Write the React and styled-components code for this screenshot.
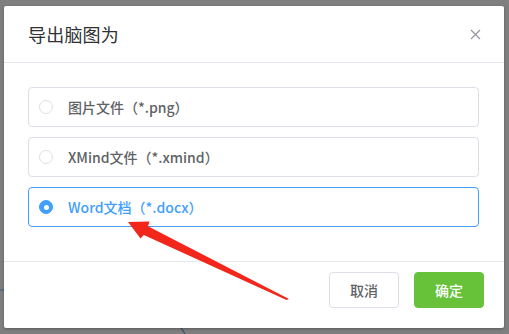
import styled, { createGlobalStyle } from "styled-components";

const GlobalStyle = createGlobalStyle`
  html, body {
    margin: 0;
    padding: 0;
    background: #7f7f7f;
    font-family: "Noto Sans CJK SC", "Noto Sans", sans-serif;
    overflow: hidden;
  }
`;

const options = [
  { label: "图片文件（*.png）" },
  { label: "XMind文件（*.xmind）" },
  { label: "Word文档（*.docx）", checked: true },
];

function App() {
  return (
    <>
      <GlobalStyle />
      <Page>
        <Backdrop viewBox="0 0 509 334" width="509" height="334">
          <line x1="0" y1="290" x2="5" y2="290" stroke="#3d5f80" strokeWidth="1" />
          <line x1="180" y1="326" x2="185" y2="334" stroke="#3d4f5f" strokeWidth="1.2" />
        </Backdrop>
        <Dialog>
          <Header>
            <Title>导出脑图为</Title>
            <Close aria-label="close">
              <svg width="11" height="11" viewBox="0 0 11 11">
                <path d="M1 1L10 10M10 1L1 10" stroke="#909399" strokeWidth="1.1" fill="none" />
              </svg>
            </Close>
          </Header>
          <Body>
            {options.map((o) => (
              <Option key={o.label} $checked={o.checked}>
                <Radio $checked={o.checked} />
                <OptionText $checked={o.checked}>{o.label}</OptionText>
              </Option>
            ))}
          </Body>
          <Footer>
            <Button>取消</Button>
            <Button $primary>确定</Button>
          </Footer>
        </Dialog>
        <Arrow viewBox="0 0 509 334" width="509" height="334">
          <polygon
            points="128,222 149.5,221.6 148,226.3 289,299 286.5,300 143.8,235 140.5,238.5"
            fill="#f3261b"
          />
        </Arrow>
      </Page>
    </>
  );
}

const Page = styled.div`
  position: relative;
  width: 509px;
  height: 334px;
  padding: 6px 5px 6px 4px;
  box-sizing: border-box;
`;

const Backdrop = styled.svg`
  position: absolute;
  left: 0;
  top: 0;
`;

const Arrow = styled.svg`
  position: absolute;
  left: 0;
  top: 0;
  pointer-events: none;
`;

const Dialog = styled.div`
  position: relative;
  width: 500px;
  height: 322px;
  background: #fff;
  border-radius: 2px;
  box-shadow: 0 1px 3px rgba(0, 0, 0, 0.3);
  display: flex;
  flex-direction: column;
  box-sizing: border-box;
`;

const Header = styled.div`
  display: flex;
  align-items: center;
  justify-content: space-between;
  height: 56px;
  padding: 0 23px 0 24px;
  border-bottom: 1px solid #e4e7ed;
`;

const Title = styled.span`
  font-size: 18px;
  color: #303133;
  letter-spacing: 0.2px;
`;

const Close = styled.span`
  display: flex;
  align-items: center;
  justify-content: center;
  width: 11px;
  height: 11px;
`;

const Body = styled.div`
  display: flex;
  flex-direction: column;
  gap: 10px;
  padding: 24px 25px 33px 24px;
`;

const Option = styled.div`
  display: flex;
  align-items: center;
  height: 40px;
  box-sizing: border-box;
  padding-left: 10px;
  border: 1px solid ${({ $checked }) => ($checked ? "#409eff" : "#dcdfe6")};
  border-radius: 4px;
`;

const Radio = styled.span`
  width: 14px;
  height: 14px;
  box-sizing: border-box;
  border-radius: 50%;
  border: 1px solid ${({ $checked }) => ($checked ? "#409eff" : "#dcdfe6")};
  background: ${({ $checked }) => ($checked ? "#409eff" : "#fff")};
  display: flex;
  align-items: center;
  justify-content: center;

  &::after {
    content: "";
    width: 5px;
    height: 5px;
    border-radius: 50%;
    background: #fff;
    display: ${({ $checked }) => ($checked ? "block" : "none")};
  }
`;

const OptionText = styled.span`
  margin-left: 15px;
  font-size: 14px;
  font-weight: 500;
  color: ${({ $checked }) => ($checked ? "#409eff" : "#606266")};
`;

const Footer = styled.div`
  display: flex;
  justify-content: flex-end;
  gap: 15px;
  padding: 10px 20px 20px;
  border-top: 1px solid #e4e7ed;
  margin-top: auto;
`;

const Button = styled.button`
  width: 70px;
  height: 36px;
  border-radius: 4px;
  font-family: inherit;
  font-size: 14px;
  font-weight: 500;
  cursor: pointer;
  border: 1px solid ${({ $primary }) => ($primary ? "#67c23a" : "#dcdfe6")};
  background: ${({ $primary }) => ($primary ? "#67c23a" : "#fff")};
  color: ${({ $primary }) => ($primary ? "#fff" : "#606266")};
`;

export default App;
